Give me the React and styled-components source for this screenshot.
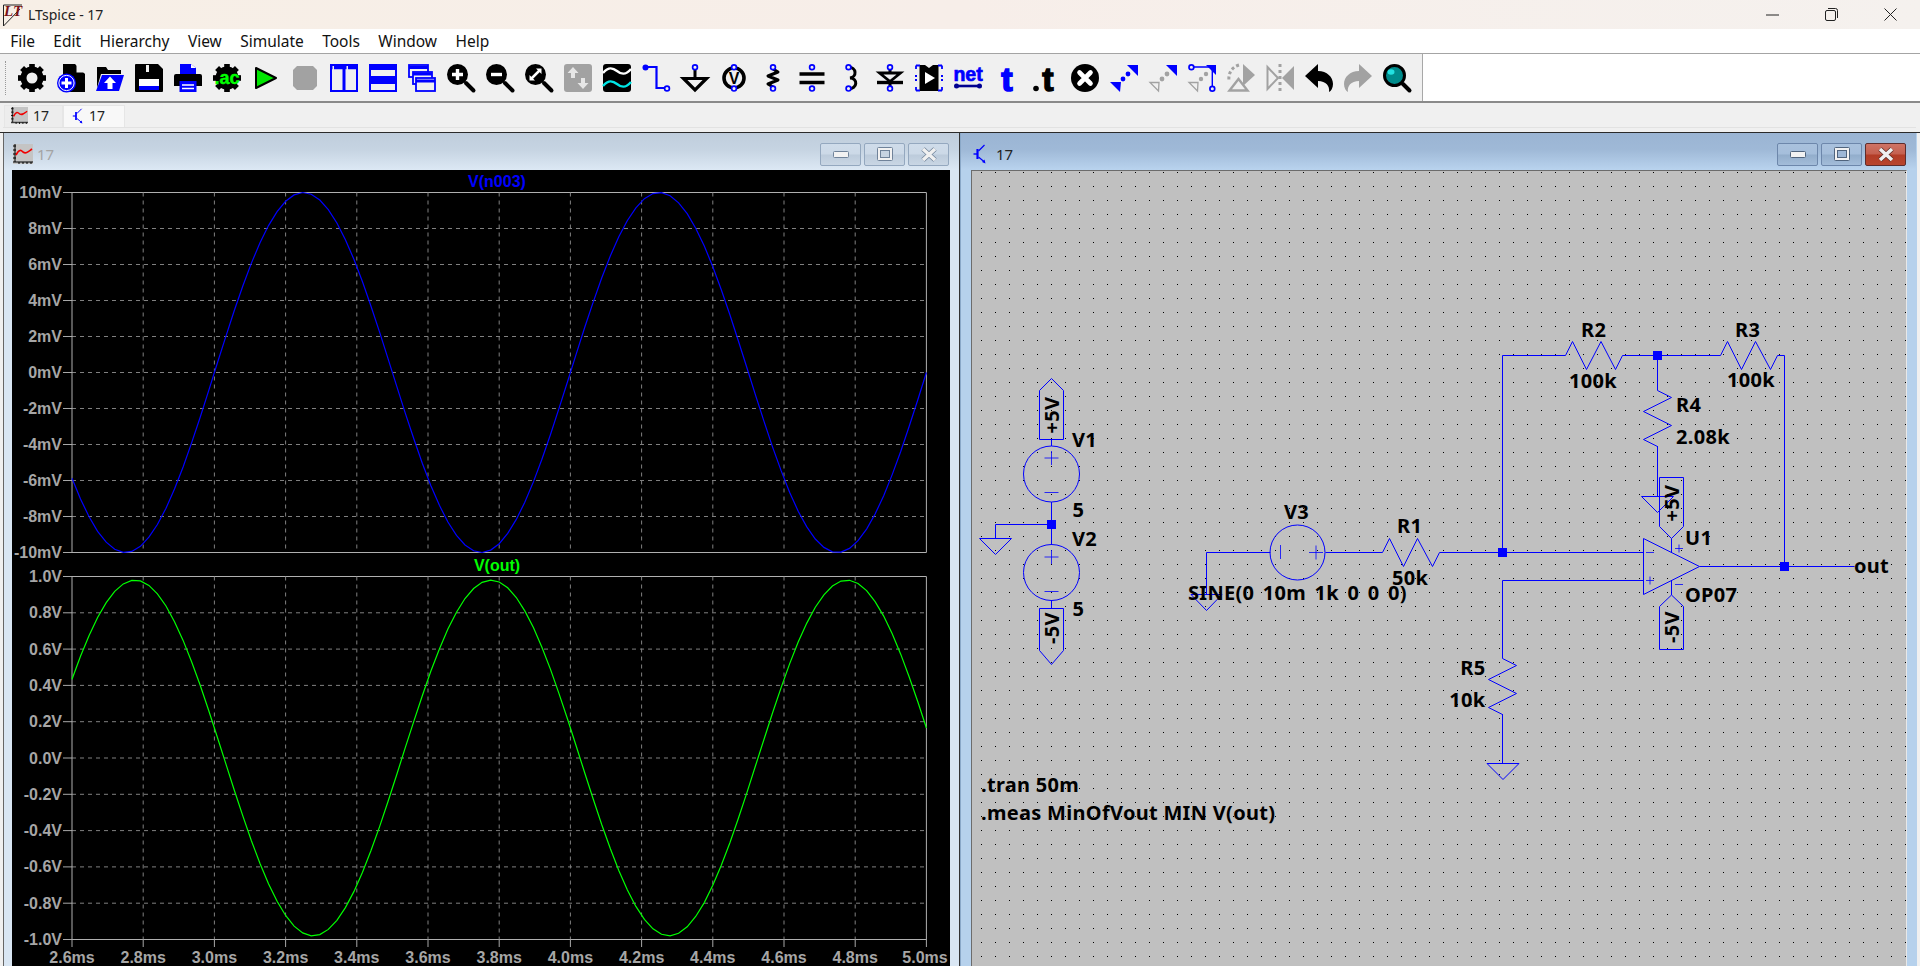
import React from 'react';
import styled, { createGlobalStyle } from 'styled-components';

const GlobalStyle = createGlobalStyle`
  html, body {
    margin: 0;
    height: 100%;
    overflow: hidden;
    background: #f0f0f0;
    font-family: "Noto Sans", "Open Sans", sans-serif;
  }
`;

const Page = styled.div`
  display: flex;
  flex-direction: column;
  width: 1920px;
  height: 966px;
  overflow: hidden;
`;

const TitleBar = styled.div`
  display: flex;
  align-items: center;
  height: 29px;
  padding-left: 2px;
  background: linear-gradient(90deg, #f7efe6, #f7eee9 50%, #f5f1ee);
  color: #222;
  font-size: 14px;
`;

const AppName = styled.span`
  margin-left: 4px;
  flex: 1;
`;

const WinControls = styled.div`
  display: flex;
`;

const WinControl = styled.div`
  width: 59px;
  height: 29px;
  display: flex;
  align-items: center;
  justify-content: center;
`;

const MenuBar = styled.div`
  display: flex;
  align-items: center;
  height: 24px;
  padding-left: 1px;
  background: #fff;
  border-bottom: 1px solid #a4a4a4;
  font-size: 15.5px;
  color: #111;
`;

const MenuItem = styled.span`
  padding: 0 9.2px;
`;

const ToolbarRow = styled.div`
  display: flex;
  height: 47px;
  background: #fff;
  border-bottom: 2px solid #8a8a8a;
`;

const Toolbar = styled.div`
  display: flex;
  align-items: center;
  gap: 11px;
  width: 1423px;
  box-sizing: border-box;
  padding: 1px 0 0 18px;
  background: #f0f0f0;
  border-right: 1px solid #a8a8a8;
  position: relative;
  &::before {
    content: '';
    position: absolute;
    left: 5px;
    top: 7px;
    bottom: 6px;
    border-left: 1px dotted #999;
  }
`;

const ToolIcon = styled.svg`
  width: 28px;
  height: 28px;
  flex: none;
  display: block;
  overflow: visible;
`;

const TabBar = styled.div`
  display: flex;
  align-items: flex-start;
  height: 29px;
  box-sizing: border-box;
  padding: 2px 0 0 4px;
  background: #f0f0f0;
  position: relative;
  &::after {
    content: '';
    position: absolute;
    left: 3px;
    right: 4px;
    top: 24px;
    height: 1px;
    background: #e2e2e2;
  }
`;

const Tab = styled.div`
  display: flex;
  align-items: center;
  gap: 5px;
  height: 22px;
  width: ${p => (p.$active ? 62 : 59)}px;
  box-sizing: border-box;
  padding-left: ${p => (p.$active ? 8 : 6)}px;
  padding-bottom: 2px;
  background: ${p => (p.$active ? '#f8f8f8' : '#ededed')};
  border: 1px solid #e6e6e6;
  border-bottom: none;
  font-size: 14px;
  color: #222;
`;

const Workspace = styled.div`
  display: flex;
  flex: 1;
  min-height: 0;
  padding-left: 3px;
  background: #f0f0f0;
  border-top: 1px solid #2a2a2a;
`;

const MdiWindow = styled.div`
  width: 957px;
  box-sizing: border-box;
  display: flex;
  flex-direction: column;
  background: ${p => (p.$active ? '#b6d1ec' : '#d9e6f3')};
  border-left: 1px solid ${p => (p.$active ? '#8aa8c8' : '#666')};
  border-right: 1px solid ${p => (p.$active ? '#b6d1ec' : '#333')};
`;

const WinHeader = styled.div`
  display: flex;
  align-items: center;
  height: 37px;
  box-sizing: border-box;
  flex: none;
  padding: 5px 10px 0 ${p => (p.$active ? '12px' : '9px')};
  background: ${p => p.$active
    ? 'linear-gradient(180deg, #9ab4d3 0%, #9fb9d7 45%, #b9d3ee 100%)'
    : 'linear-gradient(180deg, #bfcddc 0%, #c6d4e2 45%, #dce8f4 100%)'};
  font-size: 15px;
  color: ${p => (p.$active ? '#222' : '#a4a4a4')};
`;

const WinTitle = styled.span`
  margin-left: ${p => (p.$active ? 9 : 4)}px;
  flex: 1;
`;

const HeaderButtons = styled.div`
  display: flex;
  gap: 3px;
`;

const HeaderButton = styled.div`
  width: 41px;
  height: 23px;
  box-sizing: border-box;
  display: flex;
  align-items: center;
  justify-content: center;
  border: 1px solid ${p => (p.$close ? '#5e2d2d' : p.$active ? '#6d87ab' : '#94a8bf')};
  border-radius: 2px;
  background: ${p => p.$close
    ? 'linear-gradient(180deg, #cf7365 0%, #c4604f 48%, #b33c26 52%, #b8452e 100%)'
    : p.$active
      ? 'linear-gradient(180deg, #a9c1dd 0%, #a5bedb 48%, #92adcb 52%, #a3bcd9 100%)'
      : 'linear-gradient(180deg, #cfdcea 0%, #ccd9e7 48%, #bccbdb 52%, #c9d6e4 100%)'};
`;

const WinBody = styled.div`
  flex: 1;
  min-height: 0;
  margin: 0 9px 0 ${p => (p.$active ? '10px' : '8px')};
  overflow: hidden;
  background: ${p => (p.$active ? '#c0c0c0' : '#000')};
  ${p => p.$active && `
    border-top: 1px solid #6c6c6c;
    border-left: 1px solid #6c6c6c;
    border-right: 1px solid #e8e8e8;
    box-sizing: border-box;
  `}
`;

const Canvas = styled.svg`
  display: block;
`;

const AxisLabel = styled.text`
  font-family: "Liberation Sans", Arial, sans-serif;
  font-weight: 700;
  font-size: 16px;
  fill: #a6a6a6;
  text-anchor: ${p => p.$anchor || 'end'};
`;

const TraceName = styled.text`
  font-family: "Liberation Sans", Arial, sans-serif;
  font-weight: 700;
  font-size: 16px;
  fill: ${p => p.$color};
  text-anchor: middle;
`;

const SchLabel = styled.text`
  font-family: "Noto Sans", "Open Sans", sans-serif;
  font-weight: 700;
  font-size: 20px;
  letter-spacing: 0.3px;
  word-spacing: ${p => p.$wordGap || 0}px;
  fill: #000;
  text-anchor: ${p => p.$anchor || 'start'};
`;

const IconText = styled.text`
  font-family: "Liberation Sans", Arial, sans-serif;
  font-weight: 700;
  font-size: ${p => p.$size}px;
  fill: ${p => p.$color};
  stroke: ${p => p.$stroke || 'none'};
  stroke-width: ${p => p.$strokeWidth || 0};
  text-anchor: middle;
`;

const LogoText = styled.text`
  font-family: "Liberation Serif", serif;
  font-weight: 700;
  font-style: italic;
  font-size: 15px;
  fill: #7a1216;
`;

const BLUE = '#0000ff';
const GRAY = '#a2a2a2';

const Ring = ({ x, y, r = 2.4 }) => <circle cx={x} cy={y} r={r} fill="#f0f0f0" stroke={BLUE} strokeWidth="1.7" />;

const Gear = ({ hole }) => (
  <g>
    <circle cx="14" cy="14" r="8.5" fill={hole ? 'none' : '#000'} stroke="#000" strokeWidth="6" />
    {[0, 45, 90, 135, 180, 225, 270, 315].map(a => (
      <rect key={a} x="11.2" y="0" width="5.6" height="6" fill="#000" transform={`rotate(${a} 14 14)`} />
    ))}
  </g>
);

const Lens = ({ children }) => (
  <g>
    <line x1="19" y1="19" x2="26.5" y2="26.5" stroke="#000" strokeWidth="4" strokeLinecap="round" />
    <circle cx="10.5" cy="10.5" r="10.5" fill="#000" />
    {children}
  </g>
);

const MoveTriangles = ({ bottom = 'blue', top = 'blue' }) => (
  <g>
    <polygon points="17,1 28,1 28,12" fill={top === 'blue' ? BLUE : GRAY} />
    {bottom === 'blue'
      ? <polygon points="0,18 11,18 10,28" fill={BLUE} />
      : <polygon points="1,18.5 10,18.5 9.5,27" fill="none" stroke={GRAY} strokeWidth="1.3" />}
    <circle cx="13" cy="15" r="2.4" fill={bottom === 'blue' ? BLUE : GRAY} />
    <circle cx="18" cy="10" r="2.4" fill={bottom === 'blue' ? BLUE : GRAY} />
  </g>
);

const undoPath = 'M0 12 L13 0 V7 C22 7 28 13 28 20 C28 24 26 27 24 28 C25 22 21 17 13 17 V24 Z';

const toolIcons = [
  // settings
  <Gear hole />,
  // new schematic
  <g>
    <path d="M6 0 H18 L28 10 V28 H6 Z" fill="#000" />
    <path d="M19.5 0 L28 8.5 H19.5 Z" fill="#f0f0f0" />
    <circle cx="9.5" cy="19" r="9.5" fill={BLUE} />
    <circle cx="9.5" cy="19" r="7.6" fill="none" stroke="#fff" strokeWidth="1" />
    <path d="M9.5 14 V24 M4.5 19 H14.5" stroke="#fff" strokeWidth="3" />
  </g>,
  // open
  <g>
    <path d="M1 3 H10 L12 6 H25 V10 H5 L1 24 Z" fill="#000" />
    <path d="M6 11 H28 L23 27 H0 Z" fill={BLUE} />
    <path d="M14 12.5 L20 19 H16.5 V25 H11.5 V19 H8 Z" fill="#fff" />
  </g>,
  // save
  <g>
    <path d="M1 0 H23 L28 5 V27 Q28 28 27 28 H1 Q0 28 0 27 V1 Q0 0 1 0 Z" fill="#000" />
    <rect x="8" y="0" width="12" height="9" fill="#000" />
    <rect x="11" y="1" width="3" height="7" fill="#f0f0f0" />
    <rect x="4" y="15" width="20" height="7" fill="#fff" />
    <rect x="4" y="22" width="20" height="4" fill={BLUE} />
  </g>,
  // print
  <g>
    <path d="M6 0 H17 L22 4 V10 H6 Z" fill={BLUE} />
    <path d="M17 0 L22 4 H17 Z" fill="#fff" />
    <path d="M2 10 H26 Q28 10 28 12 V22 H22 V17 H6 V22 H0 V12 Q0 10 2 10 Z" fill="#000" />
    <rect x="5.5" y="17" width="17" height="11" fill={BLUE} />
    <path d="M8 21 H20 M8 24.5 H20" stroke="#fff" strokeWidth="1.3" />
  </g>,
  // .ac analysis
  <g>
    <Gear />
    <IconText x="14" y="20" $size="18" $color="#00ff00" $stroke="#00ff00" $strokeWidth="0.4">.ac</IconText>
  </g>,
  // run
  <path d="M4 4 L24 14 L4 24 Z" fill="#00e600" stroke="#000" strokeWidth="2" strokeLinejoin="round" />,
  // halt
  <path d="M6 2 H22 L26 6 V22 L22 26 H6 L2 22 V6 Z" fill={GRAY} />,
  // tile vertically
  <g fill="none" stroke={BLUE} strokeWidth="2">
    <rect x="1" y="1" width="12.5" height="26" fill="#f0f0f0" />
    <rect x="14.5" y="1" width="12.5" height="26" fill="#f0f0f0" />
    <path d="M1 3.5 H13 M15 3.5 H27" strokeWidth="3.5" strokeDasharray="1.5 1.5 10" />
  </g>,
  // tile horizontally
  <g fill="none" stroke={BLUE} strokeWidth="2">
    <rect x="1" y="1" width="26" height="12" />
    <rect x="1" y="15" width="26" height="12" />
    <path d="M1 4 H27 M1 18 H27" strokeWidth="4" />
  </g>,
  // cascade
  <g fill="#f0f0f0" stroke={BLUE} strokeWidth="1.8">
    <rect x="1" y="1" width="19" height="12" />
    <rect x="5" y="8" width="19" height="12" />
    <rect x="8" y="14" width="19" height="13" />
    <path d="M1 3.5 H20 M5 10 H24 M8 17 H27" strokeWidth="3.2" />
  </g>,
  // zoom in
  <Lens><path d="M10.5 5 V16 M5 10.5 H16" stroke="#fff" strokeWidth="3.4" /></Lens>,
  // zoom out
  <Lens><path d="M5 10.5 H16" stroke="#fff" strokeWidth="3.4" /></Lens>,
  // zoom fit
  <Lens>
    <path d="M6 15 L15 6" stroke="#fff" strokeWidth="2.5" />
    <path d="M11 4.5 H16.5 V10 Z M4.5 11 V16.5 H10 Z" fill="#fff" />
  </Lens>,
  // autorange
  <g>
    <rect x="0" y="0" width="28" height="28" rx="3" fill={GRAY} />
    <path d="M9 3 L14.5 9 H11 V14 H7 V9 H3.5 Z M19 25 L13.5 19 H17 V14 H21 V19 H24.5 Z" fill="#e6e6e6" />
  </g>,
  // waveform
  <g>
    <rect x="0" y="0" width="28" height="28" rx="3" fill="#000" />
    <path d="M0 9 C5 3 9 3 14 7 C19 11 23 11 28 5" fill="none" stroke="#fff" strokeWidth="2.4" />
    <path d="M0 22 C5 16 9 16 14 20 C19 24 23 24 28 18" fill="none" stroke="#00e6e6" strokeWidth="2.4" />
  </g>,
  // wire
  <g>
    <path d="M3 3 H14.5 V24 H23" fill="none" stroke={BLUE} strokeWidth="2.2" />
    <circle cx="3.5" cy="3.5" r="3" fill={BLUE} />
    <Ring x={25} y={24.5} />
  </g>,
  // ground
  <g>
    <path d="M14 3 V13" stroke="#000" strokeWidth="3" />
    <path d="M2.5 14.5 H25.5 L14 26 Z" fill="none" stroke="#000" strokeWidth="3.2" />
    <Ring x={14} y={3.2} />
  </g>,
  // voltage
  <g>
    <circle cx="14" cy="14" r="10" fill="none" stroke="#000" strokeWidth="3.6" />
    <IconText x="14" y="19.5" $size="16" $color="#000">V</IconText>
    <Ring x={14} y={3.2} />
    <Ring x={14} y={24.6} />
  </g>,
  // resistor
  <g>
    <path d="M14 5 L19 8 L9 12 L19 16 L9 20 L14 23" fill="none" stroke="#000" strokeWidth="3" strokeLinejoin="round" />
    <Ring x={14} y={3.2} />
    <Ring x={14} y={24.6} />
  </g>,
  // capacitor
  <g>
    <path d="M1.5 10 H26.5 M1.5 18.5 H26.5" stroke="#000" strokeWidth="3.4" />
    <Ring x={14} y={3.2} />
    <Ring x={14} y={24.6} />
  </g>,
  // inductor
  <g>
    <path d="M11 3 C20 3 20 13 13 14 C21 14 21 25 11 25" fill="none" stroke="#000" strokeWidth="3" />
    <Ring x={11.5} y={3.2} />
    <Ring x={11.5} y={24.6} />
  </g>,
  // diode
  <g>
    <path d="M14 4 V9 M14 18 V24" stroke="#000" strokeWidth="3" />
    <path d="M3.5 9 H24.5 L14 17.5 Z" fill="#f0f0f0" stroke="#000" strokeWidth="2.8" />
    <path d="M1 18.5 H27" stroke="#000" strokeWidth="3.4" />
    <Ring x={14} y={3.2} />
    <Ring x={14} y={24.6} />
  </g>,
  // component
  <g>
    <path d="M4.5 1 H10 L14 4 L18 1 H23.5 V27 H4.5 Z" fill="#000" />
    <path d="M10 8 L20 14 L10 20 Z" fill="#fff" />
    <path d="M1 1.5 H5 M23 1.5 H27 M1 26.5 H5 M23 26.5 H27 M1 1.5 V5 M27 1.5 V5 M1 23 V26.5 M27 23 V26.5" stroke={BLUE} strokeWidth="1.8" />
    <path d="M1 11 V17 M27 11 V17" stroke={BLUE} strokeWidth="2" strokeDasharray="2 2" />
  </g>,
  // net label
  <g>
    <IconText x="14" y="17" $size="19.5" $color={BLUE} $stroke={BLUE} $strokeWidth="0.7">net</IconText>
    <path d="M2 22 H26" stroke="#000090" strokeWidth="2.6" />
    <circle cx="2.5" cy="22" r="2.5" fill="#000090" />
    <circle cx="25.5" cy="22" r="2.5" fill="#000090" />
  </g>,
  // text
  <IconText x="14" y="26.5" $size="34" $color={BLUE} $stroke={BLUE} $strokeWidth="1.6">t</IconText>,
  // spice directive
  <g>
    <IconText x="16" y="26.5" $size="34" $color="#000" $stroke="#000" $strokeWidth="1.4">t</IconText>
    <circle cx="4" cy="24.5" r="2.8" fill="#000" />
  </g>,
  // delete
  <g>
    <circle cx="14" cy="14" r="14" fill="#000" />
    <path d="M8.5 8.5 L19.5 19.5 M19.5 8.5 L8.5 19.5" stroke="#fff" strokeWidth="4.6" strokeLinecap="round" />
  </g>,
  // move
  <MoveTriangles />,
  // drag
  <MoveTriangles bottom="gray" />,
  // drag with wires
  <g>
    <polygon points="18,1 28,1 28,11" fill={BLUE} />
    <polygon points="1,18.5 10,18.5 9.5,27" fill="none" stroke={GRAY} strokeWidth="1.3" />
    <circle cx="13" cy="15" r="2.2" fill={GRAY} />
    <circle cx="18" cy="10" r="2.2" fill={GRAY} />
    <path d="M5 3 H24.3 V22" fill="none" stroke={BLUE} strokeWidth="1.4" />
    <Ring x={3.4} y={3.2} />
    <Ring x={24.3} y={24.7} />
  </g>,
  // rotate
  <g>
    <path d="M16 0 L28 11 L16 22 Z" fill={GRAY} />
    <path d="M12 1 C5 3 1 9 2 17" fill="none" stroke={GRAY} strokeWidth="3" strokeDasharray="3 2.4" />
    <path d="M2.5 26.5 H20.5 L11.5 15 Z" fill="none" stroke={GRAY} strokeWidth="2.4" />
  </g>,
  // mirror
  <g>
    <path d="M1.5 3 L12 14 L1.5 25 Z" fill="none" stroke={GRAY} strokeWidth="2" />
    <path d="M28 2 V26 L16 14 Z" fill={GRAY} />
    <path d="M14 0 V28" stroke={GRAY} strokeWidth="3" strokeDasharray="3 3" />
  </g>,
  // undo
  <path d={undoPath} fill="#000" />,
  // redo
  <path d={undoPath} fill={GRAY} transform="matrix(-1 0 0 1 28 0)" />,
  // find
  <g>
    <line x1="20" y1="20" x2="26.5" y2="26.5" stroke="#000" strokeWidth="4" strokeLinecap="round" />
    <circle cx="11.5" cy="11.5" r="10" fill="#008b8b" stroke="#000" strokeWidth="3" />
    <ellipse cx="8" cy="8" rx="3.5" ry="2.8" fill="#22e0e0" />
  </g>,
];

const ChartIcon = ({ size }) => (
  <svg width={size} height={size} viewBox="0 0 20 20">
    <rect x="0" y="0" width="20" height="20" fill="#c4c4c4" />
    <path d="M2 0 V18 M0 2 H3 M0 6 H3 M0 10 H3 M0 14 H3 M0 18 H20 M6 18 V20 M10 18 V20 M14 18 V20 M18 18 V20" stroke="#000" strokeWidth="1" fill="none" />
    <path d="M3 11 C6 5 8 6 10 8 C13 10 15 8 19 5" fill="none" stroke="#f00000" strokeWidth="1.7" />
  </svg>
);

const TransistorIcon = ({ width, height }) => (
  <svg width={width} height={height} viewBox="0 0 13 20">
    <path d="M0 10 H4" stroke="#0000ff" strokeWidth="1.4" />
    <path d="M4 5 V15" stroke="#0000ff" strokeWidth="2.2" />
    <path d="M5 7 L11 1 M5 13 L11 18" stroke="#0000ff" strokeWidth="1.2" />
    <path d="M12 19.5 L8.5 18 L11 15.5 Z" fill="#0000ff" />
  </svg>
);

const Glyph = ({ kind, active }) => {
  if (kind === 'min') {
    return <svg width="16" height="7" viewBox="0 0 16 7"><rect x="0.5" y="0.5" width="15" height="6" rx="1" fill="#f2f2f2" stroke={active ? '#50647d' : '#70839a'} /></svg>;
  }
  if (kind === 'max') {
    return (
      <svg width="16" height="14" viewBox="0 0 16 14">
        <rect x="0.5" y="0.5" width="15" height="13" rx="1" fill="#f2f2f2" stroke={active ? '#50647d' : '#70839a'} />
        <rect x="3.5" y="3.5" width="9" height="7" fill={active ? '#9db7d6' : '#c7d4e2'} stroke={active ? '#50647d' : '#70839a'} />
      </svg>
    );
  }
  return (
    <svg width="18" height="15" viewBox="0 0 18 15">
      <path d="M3 2 L15 13 M15 2 L3 13" stroke={active ? '#5c2a22' : '#70839a'} strokeWidth="5" />
      <path d="M3 2 L15 13 M15 2 L3 13" stroke="#f0f0f0" strokeWidth="3.6" />
    </svg>
  );
};

const WindowButtons = ({ active }) => (
  <HeaderButtons>
    <HeaderButton $active={active}><Glyph kind="min" active={active} /></HeaderButton>
    <HeaderButton $active={active}><Glyph kind="max" active={active} /></HeaderButton>
    <HeaderButton $active={active} $close={active}><Glyph kind="close" active={active} /></HeaderButton>
  </HeaderButtons>
);

const X0 = 72;
const XSTEP = 71.2;
const xOf = t => X0 + ((t - 2.6) / 0.2) * XSTEP;

const trace = (top, bottom, peakV, t0) => {
  const pts = [];
  const mid = (top + bottom) / 2;
  const half = (bottom - top) / 2;
  for (let t = 2.6; t <= 5.0001; t += 0.024) {
    const v = peakV * Math.cos(2 * Math.PI * (t - t0));
    pts.push(`${xOf(t).toFixed(1)},${(mid - v * half).toFixed(1)}`);
  }
  return pts.join(' ');
};

const PlotPane = ({ top, bottom, labels, name, color, peakV, t0 }) => {
  const step = (bottom - top) / 10;
  const right = xOf(5.0);
  return (
    <g>
      {labels.map((l, i) => {
        const y = top + i * step;
        const edge = i === 0 || i === labels.length - 1;
        return (
          <g key={l}>
            <line x1="63" x2={X0} y1={y} y2={y} stroke="#a8a8a8" />
            <line x1={X0} x2={right} y1={y} y2={y} stroke={edge ? '#b0b0b0' : '#808080'} strokeDasharray={edge ? 'none' : '4 4'} />
            <AxisLabel x="62" y={y + 5.5}>{l}</AxisLabel>
          </g>
        );
      })}
      {Array.from({ length: 13 }, (_, i) => {
        const x = X0 + i * XSTEP;
        const edge = i === 0 || i === 12;
        return <line key={i} x1={x} x2={x} y1={top} y2={bottom} stroke={edge ? '#b0b0b0' : '#808080'} strokeDasharray={edge ? 'none' : '4 4'} />;
      })}
      <TraceName x="497" y={top - 6} $color={color}>{name}</TraceName>
      <polyline points={trace(top, bottom, peakV, t0)} fill="none" stroke={color} strokeWidth="1.2" />
    </g>
  );
};

const topLabels = ['10mV', '8mV', '6mV', '4mV', '2mV', '0mV', '-2mV', '-4mV', '-6mV', '-8mV', '-10mV'];
const bottomLabels = ['1.0V', '0.8V', '0.6V', '0.4V', '0.2V', '0.0V', '-0.2V', '-0.4V', '-0.6V', '-0.8V', '-1.0V'];
const timeLabels = ['2.6ms', '2.8ms', '3.0ms', '3.2ms', '3.4ms', '3.6ms', '3.8ms', '4.0ms', '4.2ms', '4.4ms', '4.6ms', '4.8ms', '5.0ms'];

const WavePlot = () => (
  <Canvas width="938" height="795" viewBox="12 171 938 795">
    <PlotPane top={193.5} bottom={553.5} labels={topLabels} name="V(n003)" color="#0000ff" peakV={1} t0={3.25} />
    <PlotPane top={577.5} bottom={940.5} labels={bottomLabels} name="V(out)" color="#00ff00" peakV={0.98} t0={2.777} />
    {timeLabels.map((l, i) => {
      const x = X0 + i * XSTEP;
      return (
        <g key={l}>
          <line x1={x} x2={x} y1="940" y2="948" stroke="#a8a8a8" />
          <AxisLabel x={Math.min(x, 925)} y="963.5" $anchor="middle">{l}</AxisLabel>
        </g>
      );
    })}
  </Canvas>
);

const wires = [
  // V1, V2 supply column
  'M1050.5 439.5 V446', 'M1050.5 502 V545', 'M1050.5 600 V608.5',
  'M1050.5 524.5 H994.5 V538.5',
  // V3 and input path
  'M1269.5 552.5 H1205.5 V594.5', 'M1324.5 552.5 H1381.5',
  'M1438.5 552.5 H1642.5',
  'M1501.5 552.5 V355.5 H1564.5',
  'M1621.5 355.5 H1719.5',
  'M1776.5 355.5 H1783.5 V566.5',
  'M1698.5 566.5 H1853.5',
  'M1656.5 355.5 V390.5', 'M1656.5 446 V496.5',
  'M1501.5 580.5 H1642.5', 'M1501.5 580.5 V658.5', 'M1501.5 714 V763.5',
  'M1670.5 538.5 V552.5', 'M1670.5 580.5 V595',
];

const symbols = [
  // resistors
  '1381.5,552.5 1388.5,538.5 1402.5,566.5 1416.5,538.5 1431.5,566.5 1438.5,552.5',
  '1564.5,355.5 1571.5,341.5 1585.5,369.5 1600,341.5 1614.5,369.5 1621.5,355.5',
  '1719.5,355.5 1726.5,341.5 1740.5,369.5 1754.5,341.5 1769.5,369.5 1776.5,355.5',
  '1656.5,390.5 1670.5,397.5 1642.5,411.5 1670.5,425.5 1642.5,439.5 1656.5,446.5',
  '1501.5,658.5 1515.5,665.5 1487.5,679.5 1515.5,693.5 1487.5,707.5 1501.5,714.5',
];

const closed = [
  // grounds
  '978.5,538.5 1010.5,538.5 994.5,554.5',
  '1190,594.5 1221,594.5 1205.5,610.5',
  '1640.5,496.5 1672.5,496.5 1656.5,512.5',
  '1486,763.5 1518,763.5 1502,779.5',
  // power flags
  '1050.5,378.5 1062.5,390.5 1062.5,439.5 1038.5,439.5 1038.5,390.5',
  '1038.5,608.5 1062.5,608.5 1062.5,650.5 1050.5,664.5 1038.5,650.5',
  '1658.5,477.5 1682.5,477.5 1682.5,526.5 1670.5,538.5 1658.5,526.5',
  '1670.5,595 1682.5,606.5 1682.5,649.5 1658.5,649.5 1658.5,606.5',
  // op amp
  '1642.5,538.5 1698.5,566.5 1642.5,594.5',
];

const junctions = [[1050.5, 524.5], [1501.5, 552.5], [1656.5, 355.5], [1783.5, 566.5]];

const marks = [
  'M1043.5 458 H1057.5 M1050.5 451 V465', 'M1043.5 492.5 H1057.5',
  'M1043.5 557 H1057.5 M1050.5 550 V564', 'M1043.5 591.5 H1057.5',
  'M1279.5 545 V559', 'M1308 552.5 H1322 M1315 545.5 V559.5',
  'M1645 552.5 H1653', 'M1645 580.5 H1653 M1649 576.5 V584.5',
  'M1674 548.5 H1682 M1678 544.5 V552.5', 'M1674 584.5 H1682',
];

const labels = [
  ['V1', 1071, 447], ['5', 1071.5, 517], ['V2', 1071, 546], ['5', 1071.5, 616],
  ['V3', 1283, 519], ['R1', 1396, 533], ['50k', 1391, 585],
  ['R2', 1580, 337], ['100k', 1568, 388], ['R3', 1734, 337], ['100k', 1726, 387],
  ['R4', 1675, 412], ['2.08k', 1675, 444],
  ['U1', 1684, 545], ['OP07', 1684, 602], ['out', 1853, 573],
  ['.tran 50m', 980, 792], ['.meas MinOfVout MIN V(out)', 980, 820],
];

const Schematic = () => (
  <Canvas width="937" height="795" viewBox="971 171 937 795">
    <defs>
      <pattern id="dots" x="980" y="172" width="14" height="14" patternUnits="userSpaceOnUse">
        <rect width="1" height="1" fill="#000" />
      </pattern>
    </defs>
    <rect x="971" y="171" width="937" height="795" fill="url(#dots)" />
    <g fill="none" stroke="#0000ff" strokeWidth="1">
      {wires.map(d => <path key={d} d={d} />)}
      {marks.map(d => <path key={d} d={d} strokeWidth="0.8" />)}
      {symbols.map(p => <polyline key={p} points={p} />)}
      {closed.map(p => <polygon key={p} points={p} />)}
      <circle cx="1050.5" cy="474" r="28" />
      <circle cx="1050.5" cy="572.5" r="28" />
      <circle cx="1296.5" cy="552.5" r="27.5" />
    </g>
    {junctions.map(([x, y]) => <rect key={x} x={x - 4.5} y={y - 4.5} width="9" height="9" fill="#0000ff" />)}
    {labels.map(([t, x, y]) => <SchLabel key={t + x} x={x} y={y}>{t}</SchLabel>)}
    <SchLabel x="1187" y="600" $wordGap={3}>SINE(0 10m 1k 0 0 0)</SchLabel>
    <SchLabel x="1484.5" y="675" $anchor="end">R5</SchLabel>
    <SchLabel x="1484.5" y="707" $anchor="end">10k</SchLabel>
    <SchLabel x="0" y="0" $anchor="middle" transform="translate(1058 415) rotate(-90)">+5V</SchLabel>
    <SchLabel x="0" y="0" $anchor="middle" transform="translate(1058 628) rotate(-90)">-5V</SchLabel>
    <SchLabel x="0" y="0" $anchor="middle" transform="translate(1678 503) rotate(-90)">+5V</SchLabel>
    <SchLabel x="0" y="0" $anchor="middle" transform="translate(1678 627) rotate(-90)">-5V</SchLabel>
  </Canvas>
);

const menus = ['File', 'Edit', 'Hierarchy', 'View', 'Simulate', 'Tools', 'Window', 'Help'];

export default function App() {
  return (
    <Page>
      <GlobalStyle />
      <TitleBar>
        <svg width="22" height="24" viewBox="0 0 22 24">
          <path d="M1.5 2 V23 L18 6 M1.5 2 H20" fill="none" stroke="#222" strokeWidth="1" />
          <LogoText x="2" y="13">LT</LogoText>
        </svg>
        <AppName>LTspice - 17</AppName>
        <WinControls>
          <WinControl>
            <svg width="13" height="2" viewBox="0 0 13 2"><path d="M0 1 H13" stroke="#222" /></svg>
          </WinControl>
          <WinControl>
            <svg width="13" height="13" viewBox="0 0 13 13" fill="none" stroke="#222">
              <rect x="0.5" y="2.5" width="10" height="10" rx="1.5" />
              <path d="M3 0.5 H10.5 Q12.5 0.5 12.5 2.5 V10" />
            </svg>
          </WinControl>
          <WinControl>
            <svg width="13" height="13" viewBox="0 0 13 13"><path d="M0.5 0.5 L12.5 12.5 M12.5 0.5 L0.5 12.5" stroke="#222" /></svg>
          </WinControl>
        </WinControls>
      </TitleBar>
      <MenuBar>
        {menus.map(m => <MenuItem key={m}>{m}</MenuItem>)}
      </MenuBar>
      <ToolbarRow>
        <Toolbar>
          {toolIcons.map((icon, i) => <ToolIcon key={i} viewBox="0 0 28 28">{icon}</ToolIcon>)}
        </Toolbar>
      </ToolbarRow>
      <TabBar>
        <Tab><ChartIcon size={17} />17</Tab>
        <Tab $active><TransistorIcon width={12} height={16} />17</Tab>
      </TabBar>
      <Workspace>
        <MdiWindow>
          <WinHeader>
            <ChartIcon size={20} />
            <WinTitle>17</WinTitle>
            <WindowButtons />
          </WinHeader>
          <WinBody><WavePlot /></WinBody>
        </MdiWindow>
        <MdiWindow $active>
          <WinHeader $active>
            <TransistorIcon width={14} height={20} />
            <WinTitle $active>17</WinTitle>
            <WindowButtons active />
          </WinHeader>
          <WinBody $active><Schematic /></WinBody>
        </MdiWindow>
      </Workspace>
    </Page>
  );
}
